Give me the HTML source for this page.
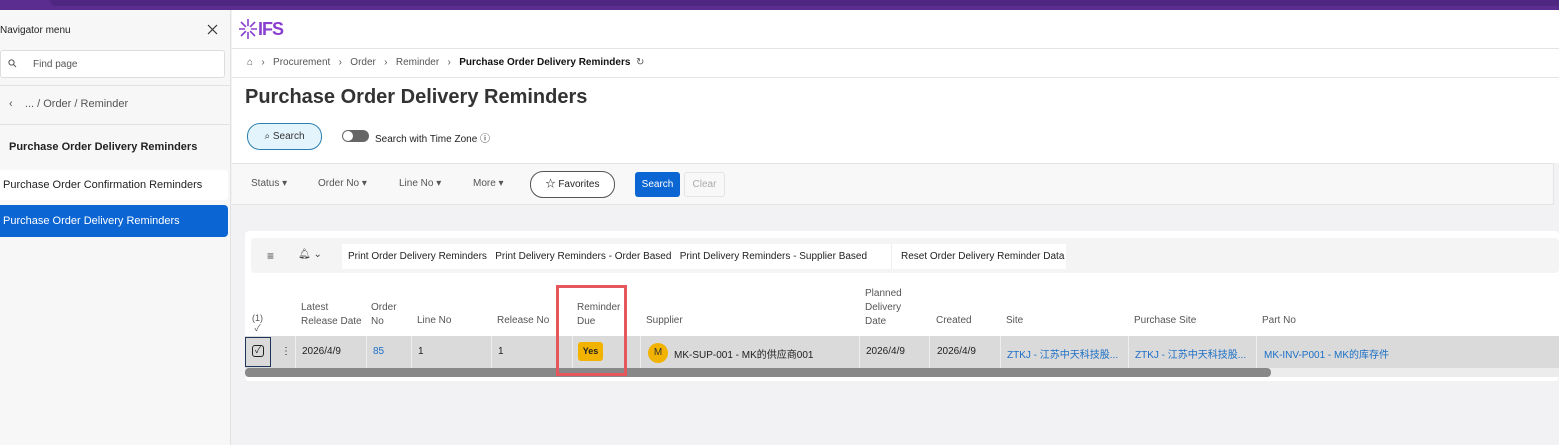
<!DOCTYPE html>
<html><head><meta charset="utf-8"><style>
*{box-sizing:border-box;margin:0;padding:0}
body{width:1559px;height:445px;overflow:hidden;font-family:"Liberation Sans","Noto Sans CJK SC",sans-serif;font-size:10px;color:#222;background:#f2f1f3;position:relative}
.a{position:absolute;white-space:nowrap}
.blue{color:#1b6fc7}
.g{color:#555}
</style></head><body>
<div class="a" style="left:0;top:0;width:1559px;height:10px;background:#5b2d90"></div>
<div class="a" style="left:50px;top:0;width:1509px;height:6px;background:#4e2780;border-bottom-left-radius:6px"></div>
<!-- sidebar -->
<div class="a" style="left:0;top:10px;width:231px;height:435px;background:#f7f7f7;border-right:1px solid #e2e2e2"></div>
<div class="a" style="left:0;top:25px;font-size:10px">Navigator menu</div>
<svg class="a" style="left:207px;top:24px" width="11" height="11" viewBox="0 0 11 11"><path d="M1 1L10 10M10 1L1 10" stroke="#333" stroke-width="1.2"/></svg>
<div class="a" style="left:0;top:50px;width:225px;height:28px;background:#fff;border:1px solid #ddd;border-radius:3px"></div>
<svg class="a" style="left:8px;top:59px" width="9" height="9" viewBox="0 0 9 9"><circle cx="3.5" cy="3.5" r="2.6" fill="none" stroke="#555"/><path d="M5.5 5.5L8 8" stroke="#555"/></svg>
<div class="a g" style="left:33px;top:59px">Find page</div>
<div class="a" style="left:0;top:85px;width:231px;border-top:1px solid #e2e2e2"></div>
<div class="a g" style="left:9px;top:98px;font-size:11px">‹ &nbsp;&nbsp; ... / Order / Reminder</div>
<div class="a" style="left:0;top:124px;width:231px;border-top:1px solid #e2e2e2"></div>
<div class="a" style="left:9px;top:141px;font-size:11px;font-weight:bold">Purchase Order Delivery Reminders</div>
<div class="a" style="left:0;top:170px;width:228px;height:30px;background:#fff;border-radius:0 4px 4px 0"></div>
<div class="a" style="left:3px;top:179px;font-size:11px">Purchase Order Confirmation Reminders</div>
<div class="a" style="left:0;top:205px;width:228px;height:32px;background:#0b66d4;border-radius:0 4px 4px 0"></div>
<div class="a" style="left:3px;top:215px;font-size:11px;color:#fff">Purchase Order Delivery Reminders</div>
<!-- header -->
<div class="a" style="left:232px;top:10px;width:1327px;height:153px;background:#fff"></div>
<div class="a" style="left:232px;top:48px;width:1327px;border-top:1px solid #e4e4e4"></div>
<div class="a" style="left:232px;top:77px;width:1327px;border-top:1px solid #e4e4e4"></div>
<svg class="a" style="left:238px;top:18px" width="20" height="22" viewBox="0 0 20 22"><g stroke="#8a3fd1" stroke-width="1.6"><path d="M10 11L10 1M10 11L17 4M10 11L19 11M10 11L17 18M10 11L10 21M10 11L3 18M10 11L1 11M10 11L3 4"/></g><circle cx="10" cy="11" r="3" fill="#fff"/></svg>
<div class="a" style="left:258px;top:19px;font-size:18px;font-weight:bold;color:#8a3fd1;letter-spacing:-1px">IFS</div>
<div class="a g" style="left:247px;top:57px">⌂ &nbsp;&nbsp;›&nbsp;&nbsp; Procurement &nbsp;&nbsp;›&nbsp;&nbsp; Order &nbsp;&nbsp;›&nbsp;&nbsp; Reminder &nbsp;&nbsp;›&nbsp;&nbsp; <b style="color:#111">Purchase Order Delivery Reminders</b> &nbsp;↻</div>
<div class="a" style="left:245px;top:86px;font-size:20px;font-weight:bold;color:#333">Purchase Order Delivery Reminders</div>
<div class="a" style="left:247px;top:123px;width:75px;height:27px;background:#e3f4fc;border:1px solid #2a7fb0;border-radius:13px;text-align:center;line-height:25px;color:#333">⌕ Search</div>
<div class="a" style="left:342px;top:130px;width:27px;height:12px;background:#666;border-radius:6px"><div style="position:absolute;left:1px;top:1px;width:10px;height:10px;border-radius:5px;background:#fff"></div></div>
<div class="a" style="left:375px;top:130px">Search with Time Zone ⓘ</div>
<!-- filter bar -->
<div class="a" style="left:232px;top:163px;width:1322px;height:42px;background:#f8f8f8;border-top:1px solid #e4e4e4;border-bottom:1px solid #e4e4e4;border-right:1px solid #e4e4e4"></div>
<div class="a g" style="left:251px;top:178px">Status ▾</div>
<div class="a g" style="left:318px;top:178px">Order No ▾</div>
<div class="a g" style="left:399px;top:178px">Line No ▾</div>
<div class="a g" style="left:473px;top:178px">More ▾</div>
<div class="a" style="left:530px;top:171px;width:85px;height:27px;background:#fff;border:1px solid #555;border-radius:13px;text-align:center;line-height:25px">☆ Favorites</div>
<div class="a" style="left:635px;top:172px;width:45px;height:25px;background:#0b66d4;border-radius:3px;color:#fff;text-align:center;line-height:25px">Search</div>
<div class="a" style="left:684px;top:172px;width:41px;height:25px;border:1px solid #e4e4e4;border-radius:3px;color:#aaa;text-align:center;line-height:23px">Clear</div>
<!-- card -->
<div class="a" style="left:245px;top:231px;width:1314px;height:150px;background:#fff;border-radius:4px"></div>
<div class="a" style="left:251px;top:238px;width:1308px;height:35px;background:#f4f4f4;border-radius:4px"></div>
<div class="a" style="left:267px;top:249px;font-size:12px;color:#444">≡</div>
<div class="a" style="left:298px;top:249px;color:#444">🔔︎ ⌄</div>
<div class="a" style="left:342px;top:244px;width:724px;height:25px;background:#fff"></div>
<div class="a" style="left:891px;top:244px;width:1px;height:25px;background:#eee"></div>
<div class="a" style="left:348px;top:251px">Print Order Delivery Reminders &nbsp;&nbsp;Print Delivery Reminders - Order Based &nbsp;&nbsp;Print Delivery Reminders - Supplier Based</div>
<div class="a" style="left:901px;top:251px">Reset Order Delivery Reminder Data</div>
<!-- headers -->
<div class="a g" style="left:252px;top:313px;font-size:9px;line-height:10px">(1)<br>&nbsp;✓</div>
<div class="a g" style="left:301px;top:301px;line-height:14px">Latest<br>Release Date</div>
<div class="a g" style="left:371px;top:301px;line-height:14px">Order<br>No</div>
<div class="a g" style="left:417px;top:315px">Line No</div>
<div class="a g" style="left:497px;top:315px">Release No</div>
<div class="a g" style="left:577px;top:301px;line-height:14px">Reminder<br>Due</div>
<div class="a g" style="left:646px;top:315px">Supplier</div>
<div class="a g" style="left:865px;top:287px;line-height:14px">Planned<br>Delivery<br>Date</div>
<div class="a g" style="left:936px;top:315px">Created</div>
<div class="a g" style="left:1006px;top:315px">Site</div>
<div class="a g" style="left:1134px;top:315px">Purchase Site</div>
<div class="a g" style="left:1262px;top:315px">Part No</div>
<!-- row -->
<div class="a" style="left:245px;top:336px;width:1314px;height:32px;background:#dadada"></div>
<div style="position:absolute;left:245px;top:336px;height:32px">
<div class="a" style="left:50px;top:0;width:1px;height:32px;background:#eee"></div>
<div class="a" style="left:121px;top:0;width:1px;height:32px;background:#eee"></div>
<div class="a" style="left:166px;top:0;width:1px;height:32px;background:#eee"></div>
<div class="a" style="left:246px;top:0;width:1px;height:32px;background:#eee"></div>
<div class="a" style="left:327px;top:0;width:1px;height:32px;background:#eee"></div>
<div class="a" style="left:395px;top:0;width:1px;height:32px;background:#eee"></div>
<div class="a" style="left:614px;top:0;width:1px;height:32px;background:#eee"></div>
<div class="a" style="left:684px;top:0;width:1px;height:32px;background:#eee"></div>
<div class="a" style="left:755px;top:0;width:1px;height:32px;background:#eee"></div>
<div class="a" style="left:883px;top:0;width:1px;height:32px;background:#eee"></div>
<div class="a" style="left:1011px;top:0;width:1px;height:32px;background:#eee"></div>
</div>
<div class="a" style="left:245px;top:337px;width:26px;height:30px;border:1px solid #1d3557"></div>
<div class="a" style="left:252px;top:345px;width:12px;height:12px;border:1.5px solid #222;border-radius:3px;font-size:9px;line-height:9px;text-align:center">✓</div>
<div class="a" style="left:281px;top:346px">⋮</div>
<div class="a" style="left:302px;top:346px">2026/4/9</div>
<div class="a blue" style="left:373px;top:346px">85</div>
<div class="a" style="left:418px;top:346px">1</div>
<div class="a" style="left:498px;top:346px">1</div>
<div class="a" style="left:578px;top:342px;width:25px;height:19px;background:#f2b300;border-radius:3px;text-align:center;line-height:19px;font-size:9px;font-weight:bold">Yes</div>
<div class="a" style="left:648px;top:343px;width:20px;height:20px;background:#f2b300;border-radius:10px;text-align:center;line-height:20px;color:#333">M</div>
<div class="a" style="left:674px;top:346px">MK-SUP-001 - MK的供应商001</div>
<div class="a" style="left:866px;top:346px">2026/4/9</div>
<div class="a" style="left:937px;top:346px">2026/4/9</div>
<div class="a blue" style="left:1007px;top:346px">ZTKJ - 江苏中天科技股...</div>
<div class="a blue" style="left:1135px;top:346px">ZTKJ - 江苏中天科技股...</div>
<div class="a blue" style="left:1264px;top:346px">MK-INV-P001 - MK的库存件</div>
<div class="a" style="left:245px;top:368px;width:1314px;height:9px;background:#ececec"></div>
<div class="a" style="left:245px;top:368px;width:1026px;height:9px;background:#888;border-radius:4px"></div>
<div class="a" style="left:556px;top:285px;width:71px;height:91px;border:3px solid #e5575c"></div>
</body></html>
